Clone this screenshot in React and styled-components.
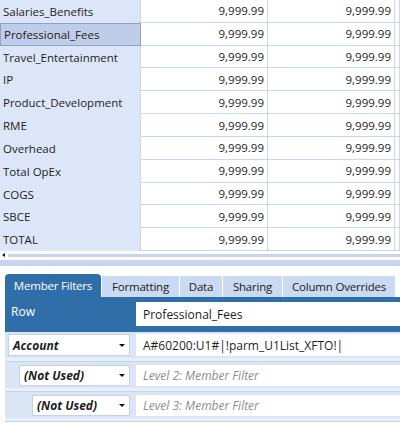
import React from "react";
import styled, { createGlobalStyle } from "styled-components";

const Global = createGlobalStyle`
  html, body { margin: 0; padding: 0; background: #fff; }
  body { font-family: "Open Sans", "Noto Sans", sans-serif; font-size: 11.5px; color: #1e1e1e; }
`;

const Page = styled.div`
  width: 400px;
  height: 424px;
  overflow: hidden;
  display: flex;
  flex-direction: column;
`;

const Grid = styled.div`
  display: flex;
  flex-direction: column;
`;

const GridRow = styled.div`
  display: grid;
  grid-template-columns: 141px 127px 127px 5px;
  height: 22.83px;
`;

const LabelCell = styled.div`
  display: flex;
  align-items: center;
  padding-left: 3px;
  background: ${(p) => (p.selected ? "#bfcde8" : "#dce6f8")};
  border: ${(p) => (p.selected ? "1px solid #8aa1cf" : "none")};
  border-right: 1px solid ${(p) => (p.selected ? "#8aa1cf" : "#c9d5ec")};
  box-sizing: border-box;
  white-space: nowrap;
`;

const ValueCell = styled.div`
  display: flex;
  align-items: center;
  justify-content: flex-end;
  padding-right: 3px;
  border-bottom: 1px solid #c8d6ef;
  border-right: 1px solid #c8d6ef;
  box-sizing: border-box;
`;

const Scroll = styled.div`
  height: 8px;
  display: flex;
  align-items: center;
  padding-left: 2px;
  gap: 3px;
`;

const ScrollArrow = styled.div`
  width: 0;
  height: 0;
  border-top: 2px solid transparent;
  border-bottom: 2px solid transparent;
  border-right: 3px solid #111;
`;

const ScrollTrack = styled.div`
  flex: 1;
  height: 3px;
  background: #c6d4ee;
`;

const Band = styled.div`
  height: 6px;
  background: #c6d4ed;
  margin-top: 1px;
`;

const Tabs = styled.div`
  display: flex;
  align-items: flex-end;
  gap: 1px;
  padding-left: 5px;
  margin-top: 7px;
  height: 24px;
`;

const Tab = styled.div`
  width: ${(p) => p.w}px;
  height: ${(p) => (p.active ? "23px" : "21px")};
  display: flex;
  align-items: center;
  justify-content: center;
  font-size: 11.5px;
  letter-spacing: -0.2px;
  background: ${(p) => (p.active ? "#2f6ea9" : "#c9daf2")};
  color: ${(p) => (p.active ? "#fff" : "#222")};
  border-radius: ${(p) => (p.active ? "4px 4px 0 0" : "0")};
  white-space: nowrap;
  flex-shrink: 0;
`;

const Panel = styled.div`
  margin-left: 5px;
  display: flex;
  flex-direction: column;
`;

const Header = styled.div`
  background: #2f6ea9;
  display: flex;
  align-items: center;
  padding: 5px 0 4px 0;
  height: 24px;
`;

const HeaderLabel = styled.div`
  width: 131px;
  padding-left: 6px;
  color: #fff;
  font-size: 12px;
  box-sizing: border-box;
  align-self: flex-start;
  margin-top: 1px;
`;

const Field = styled.div`
  flex: 1;
  height: ${(p) => p.h || "22px"};
  background: #fff;
  display: flex;
  align-items: center;
  padding-left: 7px;
  font-size: 12px;
  color: ${(p) => (p.placeholder ? "#8c8c96" : "#1e1e1e")};
  font-style: ${(p) => (p.placeholder ? "italic" : "normal")};
  white-space: nowrap;
  overflow: hidden;
`;

const FilterRow = styled.div`
  display: flex;
  align-items: center;
  height: 26px;
  background: #dae5f6;
  border-bottom: 1px solid #c5d3ec;
  box-shadow: inset 0 -3px 0 #eaf0fa;
  padding-bottom: 3px;
  box-sizing: content-box;
  &:first-child { border-top: 2px solid #2f6ea9; }
`;

const SelectWrap = styled.div`
  width: 131px;
  padding-left: ${(p) => p.indent}px;
  padding-right: 6px;
  box-sizing: border-box;
  display: flex;
`;

const Select = styled.div`
  flex: 1;
  height: ${(p) => p.h || "22px"};
  background: #fff;
  border: 1px solid #c3d1ea;
  box-sizing: border-box;
  display: flex;
  align-items: center;
  justify-content: space-between;
  padding: 0 4px 0 4px;
  font-size: 12px;
  font-weight: 700;
  font-style: italic;
`;

const Caret = styled.span`
  width: 0;
  height: 0;
  border-left: 3px solid transparent;
  border-right: 3px solid transparent;
  border-top: 3px solid #111;
`;

const rows = [
  "Salaries_Benefits",
  "Professional_Fees",
  "Travel_Entertainment",
  "IP",
  "Product_Development",
  "RME",
  "Overhead",
  "Total OpEx",
  "COGS",
  "SBCE",
  "TOTAL",
];

const tabs = [
  { label: "Member Filters", w: 96 },
  { label: "Formatting", w: 77 },
  { label: "Data", w: 42 },
  { label: "Sharing", w: 59 },
  { label: "Column Overrides", w: 112 },
];

export default function App() {
  return (
    <Page>
      <Global />
      <Grid>
        {rows.map((r) => (
          <GridRow key={r}>
            <LabelCell selected={r === "Professional_Fees"}>{r}</LabelCell>
            <ValueCell>9,999.99</ValueCell>
            <ValueCell>9,999.99</ValueCell>
            <ValueCell />
          </GridRow>
        ))}
      </Grid>
      <Scroll>
        <ScrollArrow />
        <ScrollTrack />
      </Scroll>
      <Band />
      <Tabs>
        {tabs.map((t, i) => (
          <Tab key={t.label} w={t.w} active={i === 0}>{t.label}</Tab>
        ))}
      </Tabs>
      <Panel>
        <Header>
          <HeaderLabel>Row</HeaderLabel>
          <Field h="24px">Professional_Fees</Field>
        </Header>
        <div>
          <FilterRow>
            <SelectWrap indent={3}>
              <Select>Account<Caret /></Select>
            </SelectWrap>
            <Field>A#60200:U1#|!parm_U1List_XFTO!|</Field>
          </FilterRow>
          <FilterRow>
            <SelectWrap indent={14}>
              <Select h="21px">(Not Used)<Caret /></Select>
            </SelectWrap>
            <Field h="21px" placeholder="1">Level 2: Member Filter</Field>
          </FilterRow>
          <FilterRow>
            <SelectWrap indent={27}>
              <Select h="21px">(Not Used)<Caret /></Select>
            </SelectWrap>
            <Field h="21px" placeholder="1">Level 3: Member Filter</Field>
          </FilterRow>
        </div>
      </Panel>
    </Page>
  );
}
